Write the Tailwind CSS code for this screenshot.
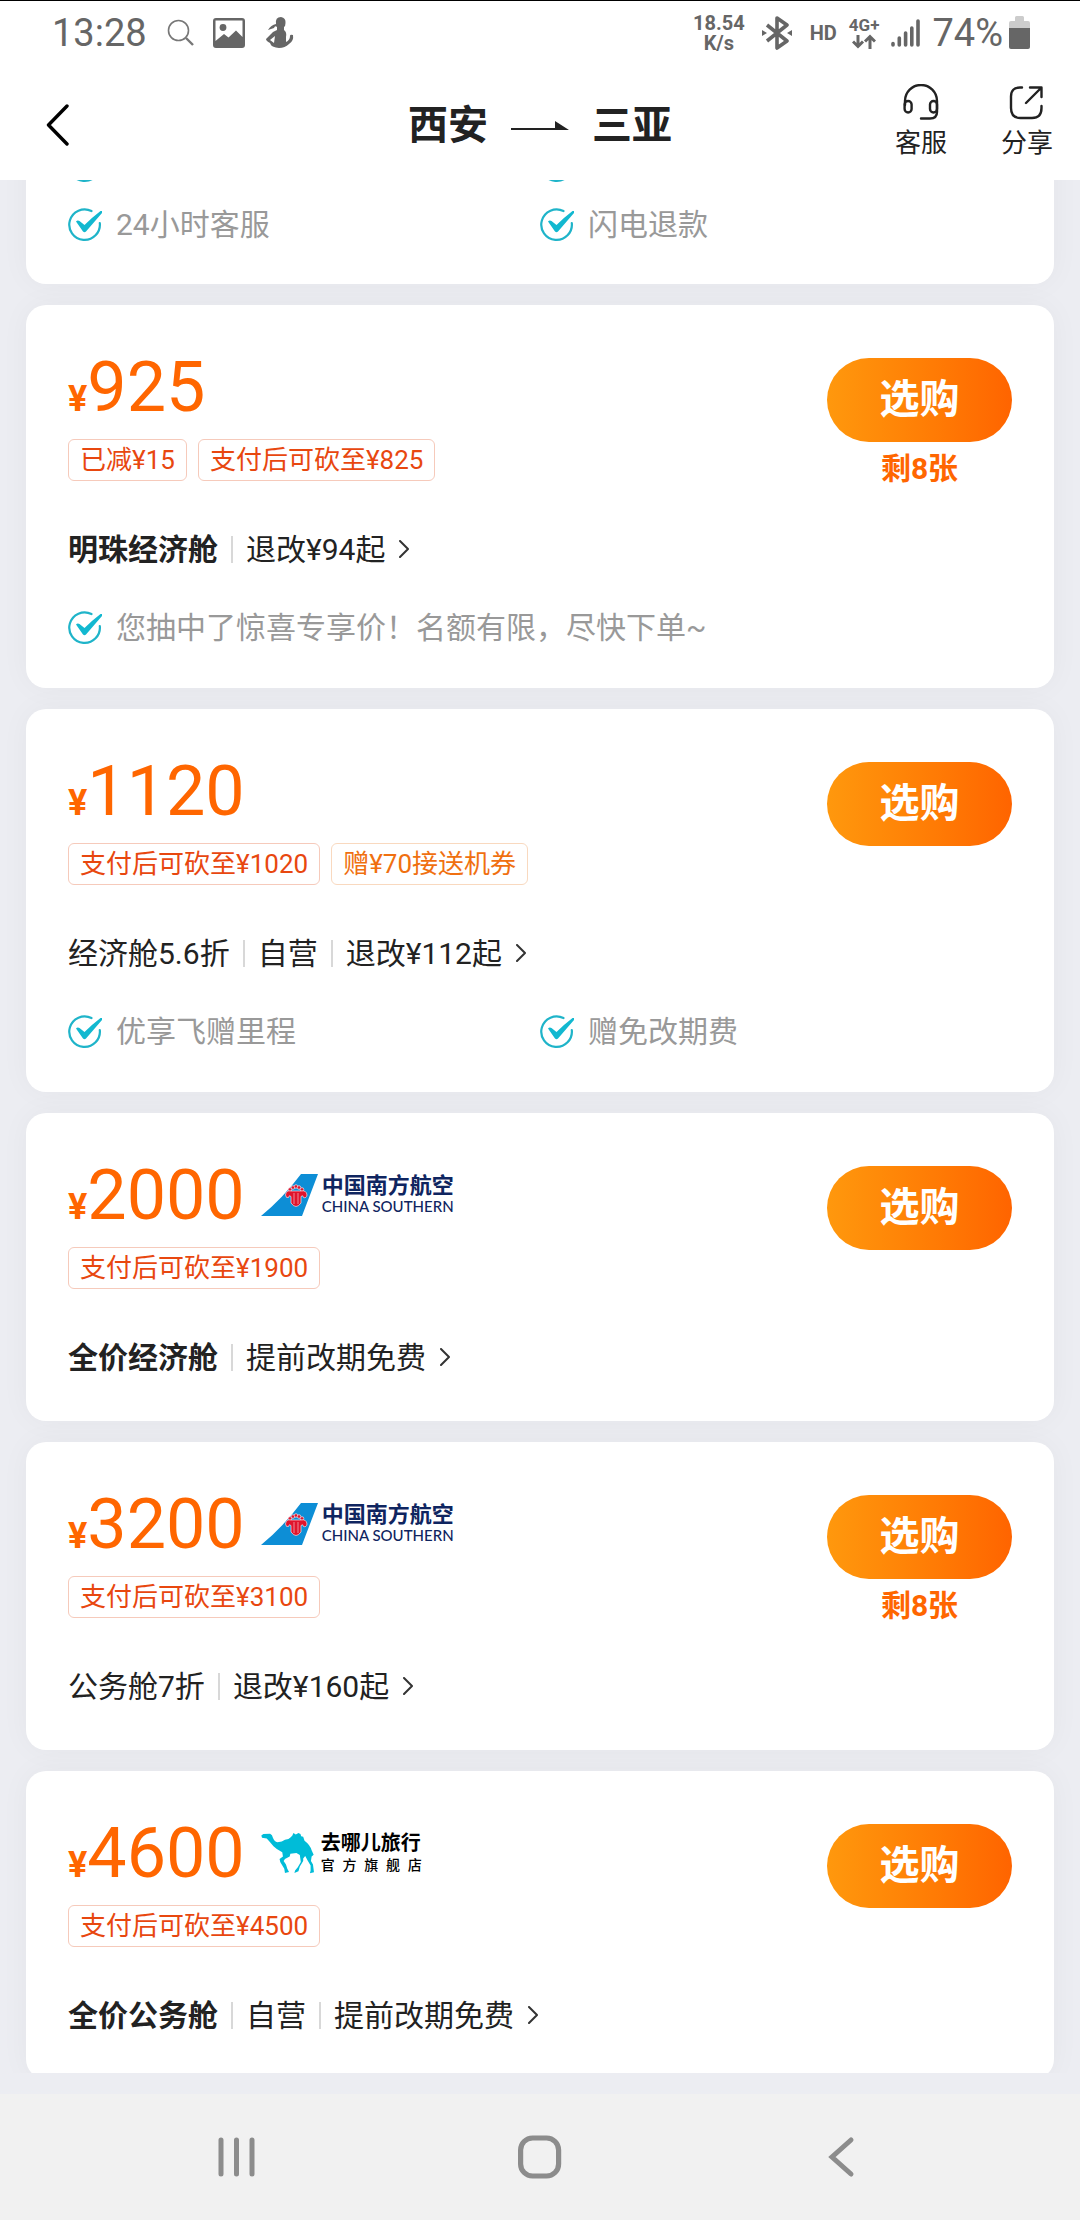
<!DOCTYPE html>
<html lang="zh-CN">
<head>
<meta charset="utf-8">
<meta name="viewport" content="width=device-width, initial-scale=1">
<title>西安 — 三亚</title>
<script src="https://cdn.jsdelivr.net/npm/@tailwindcss/browser@4"></script>
</head>
<body class="flex h-screen flex-col bg-[#ecedf2] font-[Roboto,'Noto_Sans_CJK_SC',sans-serif] text-[#222]">

<!-- shared icons -->
<svg class="hidden" aria-hidden="true">
  <symbol id="check" viewBox="0 0 34 34">
    <path d="M23.5 3 A15.3 15.3 0 1 0 31.8 15" fill="none" stroke="#1fb4c9" stroke-width="2.2" stroke-linecap="round"/>
    <path d="M8 13.5 Q9.5 12 11.5 13 L16.5 17 Q24 9.500 32.500 3 Q35 2.500 34 5 L18 23.500 Q16.500 25 15 23.500 Z" fill="#12b8d0"/>
  </symbol>
  <symbol id="more" viewBox="0 0 10 18">
    <path d="M1 1 L9 9 L1 17" fill="none" stroke="#333" stroke-width="2" stroke-linecap="round" stroke-linejoin="round"/>
  </symbol>
  <symbol id="fin" viewBox="0 0 57 42">
    <path d="M40 0 H57 L41 42 H0 Q22 24 40 0 Z" fill="#0d8ed6"/>
    <g fill="#e0142c" stroke="#f4dfe6" stroke-width=".7">
      <circle cx="29" cy="15.500" r="1.800"/><circle cx="32" cy="13.500" r="1.800"/><circle cx="35" cy="12.500" r="1.800"/><circle cx="38" cy="13.500" r="1.800"/><circle cx="41" cy="15.500" r="1.800"/>
      <path d="M30 17 Q25 16 24.500 21 Q25 24.500 27.500 23.500 Q28 20.500 30 22.500 V29 Q35 36 40 29 V22.500 Q42 20.500 42.500 23.500 Q45.500 24.500 46 21 Q45.500 16 40 17 Z"/>
    </g>
    <path d="M33 19 V30 M37 19 V30" stroke="#f4b9c3" stroke-width=".7"/>
  </symbol>
</svg>

<!-- system status bar -->
<div class="flex h-16 shrink-0 items-center justify-between border-t border-black bg-white pr-[50px] pl-[52px] text-[#666]">
  <div class="flex items-center">
    <time class="text-[38px] leading-10">13:28</time>
    <svg class="ml-5 h-7 w-7" viewBox="0 0 28 28" fill="none" stroke="#777"><circle cx="11.500" cy="11.500" r="10" stroke-width="1.600"/><path d="M19 19 L26 26" stroke-width="2.400"/></svg>
    <svg class="ml-[18px] h-[30px] w-8" viewBox="0 0 32 30"><path fill="#666" fill-rule="evenodd" d="M3 0 H29 Q32 0 32 3 V27 Q32 30 29 30 H3 Q0 30 0 27 V3 Q0 0 3 0 Z M2.500 2.500 V23 L11 16 L15.500 19.500 L23 12.500 L29.500 19 V2.500 Z"/><circle cx="10" cy="9.500" r="3.400" fill="#666"/></svg>
    <svg class="ml-[21px] h-[31px] w-7" viewBox="0 0 28 31"><path fill="#666" fill-rule="evenodd" d="M15 0 Q20 1 19.500 6 Q19.500 9 18 10 L18 13 Q21 15 20 20 L20 25 Q24 23 24 19 Q24 17 27 18 Q28 24 23 27 Q19 31 13 31 Q6 30 5 28 L4 26 Q0 24 0 22 L7 15 L11 13 L11 10 Q9 8 8 11 L2 13 Q5 8 10 7 Q9 0 15 0 Z M9 19 L4 23 L8 26 Z"/></svg>
  </div>
  <div class="flex items-center">
    <p class="text-center text-[20px] leading-5 font-bold">18.54<br>K/s</p>
    <svg class="ml-[17px] h-[34px] w-[30px]" viewBox="0 0 30 34"><path d="M5 9 L25 25 L15 32 V2 L25 9 L5 25" fill="none" stroke="#666" stroke-width="3.600" stroke-linejoin="round"/><path fill="#666" d="M0 14 L5 17 L0 20 Z M30 14 L25 17 L30 20 Z"/></svg>
    <span class="ml-[18px] text-[20px] leading-6 font-bold">HD</span>
    <span class="ml-3 flex flex-col items-center text-[17px] leading-[18px] font-bold">4G+
      <svg class="h-[15px] w-6" viewBox="0 0 24 15" fill="none" stroke="#666" stroke-width="3"><path d="M6 1 V13 M1 7.500 L6 12.500 L11 7.500 M18 15 V2 M13 7.500 L18 2.500 L23 7.500"/></svg>
    </span>
    <svg class="ml-3 h-7 w-[29px]" viewBox="0 0 29 28" stroke="#666" stroke-width="3.600" stroke-linecap="round"><path d="M2 24.500 V26 M8.300 19 V26 M14.600 14 V26 M20.800 9 V26 M27 2 V26"/></svg>
    <span class="ml-3 text-[38px] leading-10">74%</span>
    <svg class="ml-[6px] h-[33px] w-[21px]" viewBox="0 0 21 33"><path fill="#ccc" d="M6 1.500 Q6 0 7.500 0 H13.500 Q15 0 15 1.500 V5 H19 Q21 5 21 7 V13 H0 V7 Q0 5 2 5 H6 Z"/><path fill="#666" d="M0 12 H21 V31 Q21 33 19 33 H2 Q0 33 0 31 Z"/></svg>
  </div>
</div>

<!-- page header -->
<header class="grid h-[116px] shrink-0 grid-cols-[1fr_auto_1fr] items-center bg-white pr-[27px] pl-[46px]">
  <div class="flex pt-[6px]">
    <button aria-label="返回"><svg class="h-[42px] w-6" viewBox="0 0 24 42"><path d="M21 2 L2.500 21 L21 40" fill="none" stroke="#000" stroke-width="3.400" stroke-linecap="round" stroke-linejoin="round"/></svg></button>
  </div>
  <h1 class="flex items-center pt-2 pr-[19px] text-[40px] leading-[56px] font-bold">西安
    <svg class="mx-[23px] h-[10px] w-[58px]" viewBox="0 0 58 10" fill="#222"><path d="M0 7 H44 V0 L58 9 H0 Z"/></svg>
    三亚</h1>
  <nav class="flex justify-end gap-[54px] text-[26px] leading-[34px]">
    <button class="flex flex-col items-center gap-[6px]">
      <svg class="h-9 w-9" viewBox="0 0 36 36" fill="none" stroke="#222" stroke-width="2.400" stroke-linecap="round"><path d="M2 21 V17 A16 16 0 0 1 34 17 V28 Q34 34.500 27 34.500 H18"/><rect x="1.600" y="17" width="7" height="11.500" rx="3.500"/><rect x="27" y="17" width="7" height="11.500" rx="3.500"/></svg>
      客服</button>
    <button class="flex flex-col items-center gap-[6px]">
      <svg class="h-9 w-9" viewBox="0 0 36 36" fill="none" stroke="#222" stroke-width="2.400" stroke-linecap="round" stroke-linejoin="round"><path d="M13 3.500 H11 Q2 3.500 2 12.500 V24 Q2 34 11.500 34 H23 Q32.500 34 32.500 24 V22 M17 19 L31 5 M21 3.500 H32.500 V13"/></svg>
      分享</button>
  </nav>
</header>

<!-- fare list -->
<main class="mb-[21px] min-h-0 flex-1 overflow-hidden">
  <div class="-mt-[35px] flex flex-col gap-[21px] px-[26px]">

    <article class="rounded-b-[20px] bg-white px-[42px] pb-[38px] shadow-[0_0_30px_rgba(0,0,0,0.04)]">
      <ul class="grid grid-cols-2 gap-y-[17px] text-[30px] leading-[42px] text-[#999]">
        <li class="flex h-[42px] items-center"><svg class="h-[34px] w-[34px]"><use href="#check"/></svg></li>
        <li class="flex h-[42px] items-center"><svg class="h-[34px] w-[34px]"><use href="#check"/></svg></li>
        <li class="flex items-center gap-[14px]"><svg class="h-[34px] w-[34px]"><use href="#check"/></svg>24小时客服</li>
        <li class="flex items-center gap-[14px]"><svg class="h-[34px] w-[34px]"><use href="#check"/></svg>闪电退款</li>
      </ul>
    </article>

    <article class="rounded-[20px] bg-white px-[42px] pt-10 pb-[39px] shadow-[0_0_30px_rgba(0,0,0,0.04)]">
      <div class="flex justify-between">
        <div>
          <p class="flex h-[84px] items-baseline text-[70px] leading-[84px] text-[#ff6600]"><span class="text-[36px] font-bold">¥</span>925</p>
          <div class="mt-[10px] flex gap-[11px] text-[26px] leading-10 text-[#e8470f]">
            <span class="rounded-md border border-[#f6cabb] px-[11px]">已减¥15</span>
            <span class="rounded-md border border-[#f6cabb] px-[11px]">支付后可砍至¥825</span>
          </div>
        </div>
        <div class="pt-[13px] text-center">
          <button class="h-[84px] w-[185px] rounded-full bg-linear-to-r from-[#ff980d] to-[#ff6400] text-[40px] font-bold text-white">选购</button>
          <p class="mt-[6px] text-[30px] leading-[42px] font-bold text-[#ff6600]">剩8张</p>
        </div>
      </div>
      <a href="#" class="mt-[34px] flex h-[50px] items-center text-[30px]"><b>明珠经济舱</b><i class="mx-[13px] h-[27px] w-[2px] bg-[#d8d8d8]"></i>退改¥94起<svg class="ml-[14px] h-[18px] w-[10px]"><use href="#more"/></svg></a>
      <ul class="mt-[33px] grid text-[30px] leading-[42px] text-[#999]">
        <li class="flex items-center gap-[14px]"><svg class="h-[34px] w-[34px]"><use href="#check"/></svg>您抽中了惊喜专享价！名额有限，尽快下单~</li>
      </ul>
    </article>

    <article class="rounded-[20px] bg-white px-[42px] pt-10 pb-[39px] shadow-[0_0_30px_rgba(0,0,0,0.04)]">
      <div class="flex justify-between">
        <div>
          <p class="flex h-[84px] items-baseline text-[70px] leading-[84px] text-[#ff6600]"><span class="text-[36px] font-bold">¥</span>1120</p>
          <div class="mt-[10px] flex gap-[11px] text-[26px] leading-10 text-[#e8470f]">
            <span class="rounded-md border border-[#f6cabb] px-[11px]">支付后可砍至¥1020</span>
            <span class="rounded-md border border-[#f9d9bf] px-[11px] text-[#f07010]">赠¥70接送机券</span>
          </div>
        </div>
        <div class="pt-[13px] text-center">
          <button class="h-[84px] w-[185px] rounded-full bg-linear-to-r from-[#ff980d] to-[#ff6400] text-[40px] font-bold text-white">选购</button>
        </div>
      </div>
      <a href="#" class="mt-[43px] flex h-[50px] items-center text-[30px]">经济舱5.6折<i class="mx-[13px] h-[27px] w-[2px] bg-[#d8d8d8]"></i>自营<i class="mx-[13px] h-[27px] w-[2px] bg-[#d8d8d8]"></i>退改¥112起<svg class="ml-[14px] h-[18px] w-[10px]"><use href="#more"/></svg></a>
      <ul class="mt-[33px] grid grid-cols-2 text-[30px] leading-[42px] text-[#999]">
        <li class="flex items-center gap-[14px]"><svg class="h-[34px] w-[34px]"><use href="#check"/></svg>优享飞赠里程</li>
        <li class="flex items-center gap-[14px]"><svg class="h-[34px] w-[34px]"><use href="#check"/></svg>赠免改期费</li>
      </ul>
    </article>

    <article class="rounded-[20px] bg-white px-[42px] pt-10 pb-[39px] shadow-[0_0_30px_rgba(0,0,0,0.04)]">
      <div class="flex justify-between">
        <div>
          <div class="flex items-center gap-4">
            <p class="flex h-[84px] items-baseline text-[70px] leading-[84px] text-[#ff6600]"><span class="text-[36px] font-bold">¥</span>2000</p>
            <div class="flex items-center gap-1 text-[#0f2560]">
              <svg class="h-[42px] w-[57px]"><use href="#fin"/></svg>
              <div><p class="text-[22px] leading-[22px] font-bold">中国南方航空</p><p class="font-[Lato,sans-serif] text-[15px] leading-[18px] font-medium">CHINA SOUTHERN</p></div>
            </div>
          </div>
          <div class="mt-[10px] flex gap-[11px] text-[26px] leading-10 text-[#e8470f]">
            <span class="rounded-md border border-[#f6cabb] px-[11px]">支付后可砍至¥1900</span>
          </div>
        </div>
        <div class="pt-[13px] text-center">
          <button class="h-[84px] w-[185px] rounded-full bg-linear-to-r from-[#ff980d] to-[#ff6400] text-[40px] font-bold text-white">选购</button>
        </div>
      </div>
      <a href="#" class="mt-[43px] flex h-[50px] items-center text-[30px]"><b>全价经济舱</b><i class="mx-[13px] h-[27px] w-[2px] bg-[#d8d8d8]"></i>提前改期免费<svg class="ml-[14px] h-[18px] w-[10px]"><use href="#more"/></svg></a>
    </article>

    <article class="rounded-[20px] bg-white px-[42px] pt-10 pb-[39px] shadow-[0_0_30px_rgba(0,0,0,0.04)]">
      <div class="flex justify-between">
        <div>
          <div class="flex items-center gap-4">
            <p class="flex h-[84px] items-baseline text-[70px] leading-[84px] text-[#ff6600]"><span class="text-[36px] font-bold">¥</span>3200</p>
            <div class="flex items-center gap-1 text-[#0f2560]">
              <svg class="h-[42px] w-[57px]"><use href="#fin"/></svg>
              <div><p class="text-[22px] leading-[22px] font-bold">中国南方航空</p><p class="font-[Lato,sans-serif] text-[15px] leading-[18px] font-medium">CHINA SOUTHERN</p></div>
            </div>
          </div>
          <div class="mt-[10px] flex gap-[11px] text-[26px] leading-10 text-[#e8470f]">
            <span class="rounded-md border border-[#f6cabb] px-[11px]">支付后可砍至¥3100</span>
          </div>
        </div>
        <div class="pt-[13px] text-center">
          <button class="h-[84px] w-[185px] rounded-full bg-linear-to-r from-[#ff980d] to-[#ff6400] text-[40px] font-bold text-white">选购</button>
          <p class="mt-[6px] text-[30px] leading-[42px] font-bold text-[#ff6600]">剩8张</p>
        </div>
      </div>
      <a href="#" class="mt-[34px] flex h-[50px] items-center text-[30px]">公务舱7折<i class="mx-[13px] h-[27px] w-[2px] bg-[#d8d8d8]"></i>退改¥160起<svg class="ml-[14px] h-[18px] w-[10px]"><use href="#more"/></svg></a>
    </article>

    <article class="rounded-[20px] bg-white px-[42px] pt-10 pb-[39px] shadow-[0_0_30px_rgba(0,0,0,0.04)]">
      <div class="flex justify-between">
        <div>
          <div class="flex items-center gap-4">
            <p class="flex h-[84px] items-baseline text-[70px] leading-[84px] text-[#ff6600]"><span class="text-[36px] font-bold">¥</span>4600</p>
            <div class="flex items-center gap-[6px] text-black">
              <svg class="h-[42px] w-[54px]" viewBox="35 56 160 124" fill="#00bcd8"><path d="M36 66 L42 62 L62 61 Q69 64 70 72 Q74 84 84 86 Q98 86 106 79 Q118 77 123 71 L128 66 L131 59 L138 63 L146 59 L152 62 L154 68 L160 70 L164 82 Q180 94 185 110 L191 123 L185 128 L183 142 L189 152 L192 175 L180 178 L182 170 L182 155 L174 142 L166 127 L160 134 L160 142 L150 158 L146 172 L134 177 L136 170 L144 160 L153 145 L150 124 L140 118 L122 120 L120 128 L106 136 L102 142 L109 152 L113 165 L118 174 L106 177 L104 165 L92 145 L90 136 L100 128 L98 116 Q82 108 72 98 L60 84 L52 75 L38 73 Z"/></svg>
              <div class="w-[101px]"><p class="text-[20px] leading-6 font-bold">去哪儿旅行</p><p class="text-[14px] leading-5 font-medium [text-align-last:justify]">官方旗舰店</p></div>
            </div>
          </div>
          <div class="mt-[10px] flex gap-[11px] text-[26px] leading-10 text-[#e8470f]">
            <span class="rounded-md border border-[#f6cabb] px-[11px]">支付后可砍至¥4500</span>
          </div>
        </div>
        <div class="pt-[13px] text-center">
          <button class="h-[84px] w-[185px] rounded-full bg-linear-to-r from-[#ff980d] to-[#ff6400] text-[40px] font-bold text-white">选购</button>
        </div>
      </div>
      <a href="#" class="mt-[43px] flex h-[50px] items-center text-[30px]"><b>全价公务舱</b><i class="mx-[13px] h-[27px] w-[2px] bg-[#d8d8d8]"></i>自营<i class="mx-[13px] h-[27px] w-[2px] bg-[#d8d8d8]"></i>提前改期免费<svg class="ml-[14px] h-[18px] w-[10px]"><use href="#more"/></svg></a>
    </article>
  </div>
</main>

<!-- system navigation -->
<nav class="flex h-[126px] shrink-0 items-center justify-center bg-[#f1f1f1]">
  <button aria-label="最近任务" class="flex w-[28%] justify-center"><svg class="h-11 w-11" viewBox="0 0 44 44" stroke="#8c8c8c" stroke-width="5" stroke-linecap="round"><path d="M5 5 V39 M20.500 5 V39 M36 5 V39"/></svg></button>
  <button aria-label="主屏幕" class="flex w-[28%] justify-center"><svg class="h-11 w-11" viewBox="0 0 44 44" fill="none" stroke="#8c8c8c" stroke-width="5.200"><rect x="2.600" y="3" width="38" height="38" rx="12"/></svg></button>
  <button aria-label="返回上一页" class="flex w-[28%] justify-center"><svg class="h-11 w-11" viewBox="0 0 44 44" fill="none" stroke="#8c8c8c" stroke-width="5" stroke-linecap="round"><path d="M31 5 L12 22 L31 39"/></svg></button>
</nav>
</body>
</html>
